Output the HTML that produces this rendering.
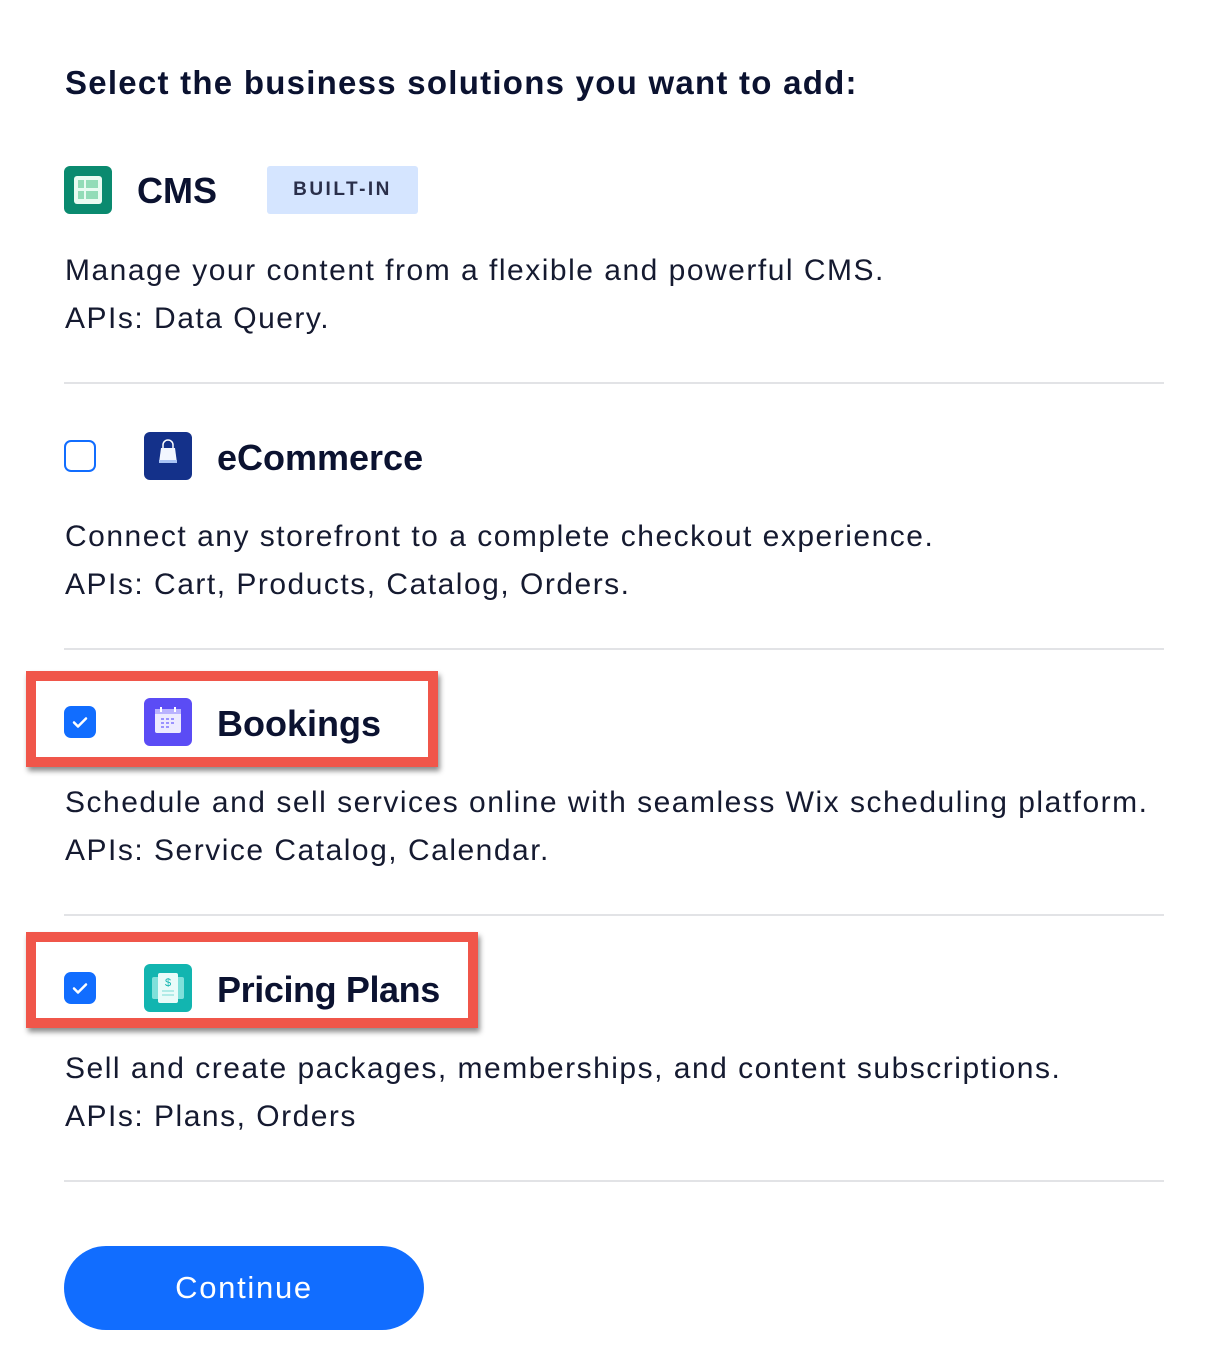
<!DOCTYPE html>
<html><head><style>
body{margin:0;background:#fff;font-family:"Liberation Sans",sans-serif;color:#0b1230;}
.a{position:absolute;}
h1{position:absolute;left:65px;top:64px;margin:0;font-size:33px;font-weight:bold;letter-spacing:1.25px;}
.t{position:absolute;font-size:36px;font-weight:bold;line-height:40px;}
.d{position:absolute;left:65px;font-size:30px;line-height:48px;letter-spacing:1.5px;color:#151a30;}
.hr{position:absolute;left:64px;width:1100px;height:2px;background:#e2e3e6;}
.cb{position:absolute;left:64px;width:32px;height:32px;border-radius:7px;box-sizing:border-box;}
.on{background:#116dff;}
.off{border:2px solid #116dff;}
.ic{position:absolute;left:144px;width:48px;height:48px;border-radius:6px;}
.red{position:absolute;border:10px solid #f0564a;box-shadow:2px 4px 5px rgba(0,0,0,.45);box-sizing:border-box;}
</style></head><body>
<h1>Select the business solutions you want to add:</h1>

<div class="a" style="left:64px;top:166px;width:48px;height:48px;border-radius:6px;background:#0a8a6f"></div>
<div class="a" style="left:74px;top:176px;width:28px;height:28px;border-radius:3px;background:#e9fbf2"></div>
<div class="a" style="left:78px;top:180px;width:6px;height:8px;background:#93dcb8"></div>
<div class="a" style="left:86px;top:180px;width:12px;height:8px;background:#93dcb8"></div>
<div class="a" style="left:78px;top:191px;width:6px;height:8px;background:#93dcb8"></div>
<div class="a" style="left:86px;top:191px;width:12px;height:8px;background:#93dcb8"></div>
<div class="t" style="left:137px;top:171px">CMS</div>
<div class="a" style="left:267px;top:166px;width:151px;height:48px;border-radius:3px;background:#d5e5ff;color:#2a2f4a;font-size:19px;font-weight:bold;letter-spacing:2.5px;text-align:center;line-height:48px">BUILT-IN</div>
<div class="d" style="top:247px">Manage your content from a flexible and powerful CMS.<br>APIs: Data Query.</div>
<div class="hr" style="top:382px"></div>

<div class="cb off" style="top:440px"></div>
<div class="ic" style="top:432px;background:#14318a"></div>
<svg class="a" style="left:144px;top:432px" width="48" height="48"><path d="M19 16v-3a5 5 0 0 1 10 0v3" fill="none" stroke="#fff" stroke-width="1.5"/><path d="M17 16h14l2 15H15z" fill="#f2f6ff"/><rect x="15" y="28" width="18" height="3" fill="#a9c3f5"/></svg>
<div class="t" style="left:217px;top:438px">eCommerce</div>
<div class="d" style="top:513px">Connect any storefront to a complete checkout experience.<br>APIs: Cart, Products, Catalog, Orders.</div>
<div class="hr" style="top:648px"></div>

<div class="red" style="left:26px;top:671px;width:412px;height:96px"></div>
<div class="cb on" style="top:706px"></div>
<svg class="a" style="left:64px;top:706px" width="32" height="32"><path d="M10 16.5l4 4 8-8" fill="none" stroke="#fff" stroke-width="2.5" stroke-linecap="round" stroke-linejoin="round"/></svg>
<div class="ic" style="top:698px;background:#5b4cf5"></div>
<svg class="a" style="left:144px;top:698px" width="48" height="48"><rect x="11" y="11" width="26" height="24" rx="2" fill="#eceaff"/><rect x="11" y="11" width="26" height="5" fill="#b9b2ff"/><path d="M17 9v5M31 9v5" stroke="#fff" stroke-width="2"/><g fill="#9b92ff"><rect x="17" y="20" width="3" height="2"/><rect x="22" y="20" width="3" height="2"/><rect x="27" y="20" width="3" height="2"/><rect x="17" y="24" width="3" height="2"/><rect x="22" y="24" width="3" height="2"/><rect x="27" y="24" width="3" height="2"/><rect x="17" y="28" width="3" height="2"/><rect x="22" y="28" width="3" height="2"/></g></svg>
<div class="t" style="left:217px;top:704px">Bookings</div>
<div class="d" style="top:779px">Schedule and sell services online with seamless Wix scheduling platform.<br>APIs: Service Catalog, Calendar.</div>
<div class="hr" style="top:914px"></div>

<div class="red" style="left:26px;top:932px;width:452px;height:96px"></div>
<div class="cb on" style="top:972px"></div>
<svg class="a" style="left:64px;top:972px" width="32" height="32"><path d="M10 16.5l4 4 8-8" fill="none" stroke="#fff" stroke-width="2.5" stroke-linecap="round" stroke-linejoin="round"/></svg>
<div class="ic" style="top:964px;background:#12b5b0"></div>
<svg class="a" style="left:144px;top:964px" width="48" height="48"><rect x="8" y="13" width="32" height="22" rx="2" fill="#7fe0da"/><rect x="14" y="9" width="20" height="30" rx="2" fill="#e8fbf9"/><text x="24" y="22" font-size="11" text-anchor="middle" fill="#12b5b0" font-family="Liberation Sans">$</text><path d="M18 27h12M18 31h12" stroke="#9de6e1" stroke-width="1.5"/></svg>
<div class="t" style="left:217px;top:970px;letter-spacing:-0.4px">Pricing Plans</div>
<div class="d" style="top:1045px">Sell and create packages, memberships, and content subscriptions.<br>APIs: Plans, Orders</div>
<div class="hr" style="top:1180px"></div>

<div class="a" style="left:64px;top:1246px;width:360px;height:84px;border-radius:42px;background:#116dff;color:#fff;font-size:31px;line-height:84px;text-align:center;letter-spacing:1.7px">Continue</div>
</body></html>
